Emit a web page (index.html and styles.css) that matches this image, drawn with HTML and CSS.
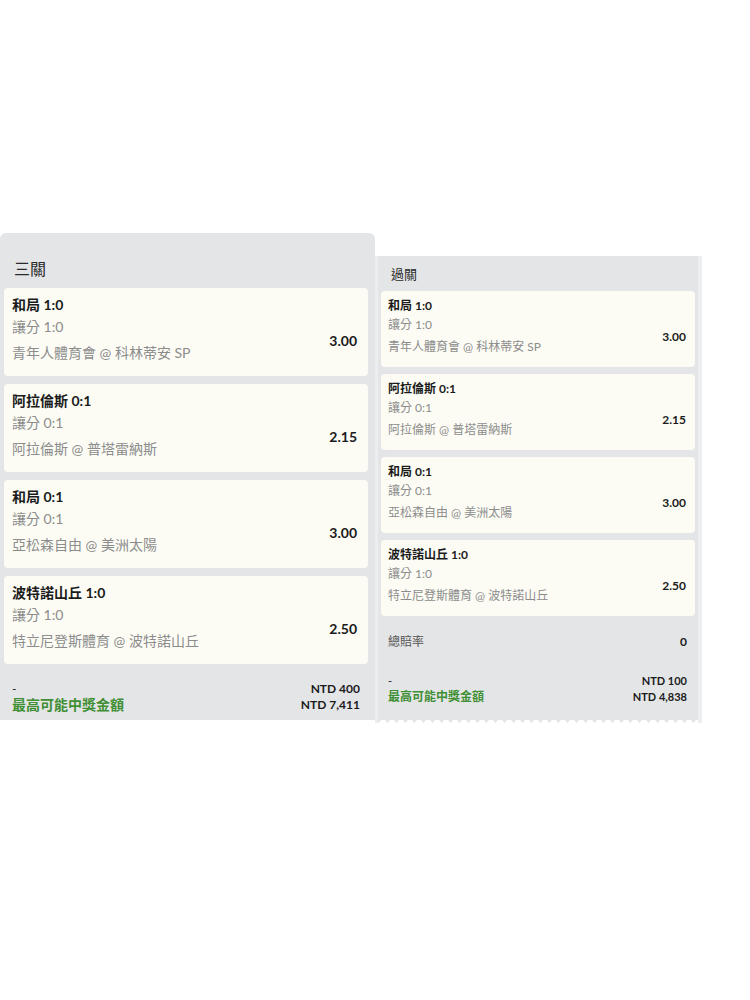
FILE: index.html
```html
<!DOCTYPE html>
<html lang="zh-Hant">
<head>
  <meta charset="UTF-8">
  <meta name="viewport" content="width=device-width, initial-scale=1.0">
  <title>過關投注</title>
  <link rel="stylesheet" href="styles.css">
</head>
<body>
  <div class="slips">
    <div class="slip slip-large">
      <h3 class="slip-title">三關</h3>
      <div class="bet-list">
        <div class="bet">
          <p class="bet-pick">和局 1:0</p>
          <div class="bet-row">
            <div class="bet-info">
              <p>讓分 1:0</p>
              <p>青年人體育會 @ 科林蒂安 SP</p>
            </div>
            <span class="bet-odds">3.00</span>
          </div>
        </div>
        <div class="bet">
          <p class="bet-pick">阿拉倫斯 0:1</p>
          <div class="bet-row">
            <div class="bet-info">
              <p>讓分 0:1</p>
              <p>阿拉倫斯 @ 普塔雷納斯</p>
            </div>
            <span class="bet-odds">2.15</span>
          </div>
        </div>
        <div class="bet">
          <p class="bet-pick">和局 0:1</p>
          <div class="bet-row">
            <div class="bet-info">
              <p>讓分 0:1</p>
              <p>亞松森自由 @ 美洲太陽</p>
            </div>
            <span class="bet-odds">3.00</span>
          </div>
        </div>
        <div class="bet">
          <p class="bet-pick">波特諾山丘 1:0</p>
          <div class="bet-row">
            <div class="bet-info">
              <p>讓分 1:0</p>
              <p>特立尼登斯體育 @ 波特諾山丘</p>
            </div>
            <span class="bet-odds">2.50</span>
          </div>
        </div>
      </div>
      <div class="slip-footer">
        <div class="footer-labels">
          <span>-</span>
          <span class="win-label">最高可能中獎金額</span>
        </div>
        <div class="footer-amounts">
          <span>NTD 400</span>
          <span>NTD 7,411</span>
        </div>
      </div>
    </div>

    <div class="slip slip-small">
      <h3 class="slip-title">過關</h3>
      <div class="bet-list">
        <div class="bet">
          <p class="bet-pick">和局 1:0</p>
          <div class="bet-row">
            <div class="bet-info">
              <p>讓分 1:0</p>
              <p>青年人體育會 @ 科林蒂安 SP</p>
            </div>
            <span class="bet-odds">3.00</span>
          </div>
        </div>
        <div class="bet">
          <p class="bet-pick">阿拉倫斯 0:1</p>
          <div class="bet-row">
            <div class="bet-info">
              <p>讓分 0:1</p>
              <p>阿拉倫斯 @ 普塔雷納斯</p>
            </div>
            <span class="bet-odds">2.15</span>
          </div>
        </div>
        <div class="bet">
          <p class="bet-pick">和局 0:1</p>
          <div class="bet-row">
            <div class="bet-info">
              <p>讓分 0:1</p>
              <p>亞松森自由 @ 美洲太陽</p>
            </div>
            <span class="bet-odds">3.00</span>
          </div>
        </div>
        <div class="bet">
          <p class="bet-pick">波特諾山丘 1:0</p>
          <div class="bet-row">
            <div class="bet-info">
              <p>讓分 1:0</p>
              <p>特立尼登斯體育 @ 波特諾山丘</p>
            </div>
            <span class="bet-odds">2.50</span>
          </div>
        </div>
      </div>
      <div class="total-odds">
        <span>總賠率</span>
        <span class="total-value">0</span>
      </div>
      <div class="slip-footer">
        <div class="footer-labels">
          <span>-</span>
          <span class="win-label">最高可能中獎金額</span>
        </div>
        <div class="footer-amounts">
          <span>NTD 100</span>
          <span>NTD 4,838</span>
        </div>
      </div>
      <div class="ticket-edge"></div>
    </div>
  </div>
</body>
</html>
```

FILE: styles.css
```css
body {
  margin: 0;
  background: #ffffff;
  font-family: Lato, "Noto Sans CJK TC", sans-serif;
  color: #1b1b1b;
}

p {
  margin: 0;
}

.slips {
  display: flex;
  align-items: flex-start;
  padding-top: 233px;
}

.slip {
  background: #e4e5e7;
}

.slip-title {
  margin: 0;
  font-weight: normal;
  color: #2a2a2a;
}

.bet {
  background: #fcfcf5;
  border-radius: 4px;
}

.bet-pick {
  font-weight: bold;
}

.bet-row {
  display: flex;
  align-items: center;
  justify-content: space-between;
}

.bet-info {
  color: #8c8c8c;
}

.bet-odds {
  font-weight: bold;
}

.bet-list {
  display: flex;
  flex-direction: column;
}

.slip-footer {
  display: flex;
  justify-content: space-between;
}

.footer-labels,
.footer-amounts {
  display: flex;
  flex-direction: column;
}

.footer-amounts {
  align-items: flex-end;
  font-weight: bold;
}

.win-label {
  color: #3f8f34;
  font-weight: bold;
}

/* left slip */
.slip-large {
  width: 375px;
  box-sizing: border-box;
  padding: 0 7px 0 4px;
  border-radius: 6px 6px 0 0;
}

.slip-large .slip-title {
  padding: 26px 10px 9px;
  font-size: 16px;
  line-height: 20px;
}

.slip-large .bet-list {
  gap: 8px;
}

.slip-large .bet {
  padding: 7px 11px 10px 8px;
}

.slip-large .bet-pick {
  font-size: 14px;
  line-height: 19px;
}

.slip-large .bet-info {
  font-size: 14px;
  line-height: 26px;
}

.slip-large .bet-odds {
  font-size: 14px;
}

.slip-large .slip-footer {
  padding: 17px 8px 7px 8px;
  font-size: 12px;
  line-height: 16px;
}

.slip-large .win-label {
  font-size: 14px;
}

/* right slip */
.slip-small {
  width: 327px;
  box-sizing: border-box;
  margin-top: 23px;
  padding: 0 3px 0 3px;
  border-left: 3px solid #eceef0;
  border-right: 4px solid #eceef0;
}

.slip-small .slip-title {
  padding: 9px 10px 8px;
  font-size: 13px;
  line-height: 18px;
}

.slip-small .bet-list {
  gap: 7px;
}

.slip-small .bet {
  padding: 7px 9px 9px 7px;
}

.slip-small .bet-pick {
  font-size: 12px;
  line-height: 16px;
}

.slip-small .bet-info {
  font-size: 12px;
  line-height: 22px;
}

.slip-small .bet-odds {
  font-size: 12px;
}

.total-odds {
  display: flex;
  justify-content: space-between;
  margin-top: 18px;
  padding: 0 8px 0 7px;
  font-size: 12px;
  line-height: 16px;
  color: #555555;
}

.total-value {
  font-weight: bold;
  color: #1b1b1b;
}

.slip-small .slip-footer {
  padding: 23px 8px 10px 7px;
  font-size: 11px;
  line-height: 16px;
}

.slip-small .win-label {
  font-size: 12px;
}

.ticket-edge {
  height: 8px;
  margin: 0 -3px;
  background: radial-gradient(circle at 5px 9px, #ffffff 4px, transparent 4.5px) repeat-x;
  background-size: 9px 8px;
}
```
